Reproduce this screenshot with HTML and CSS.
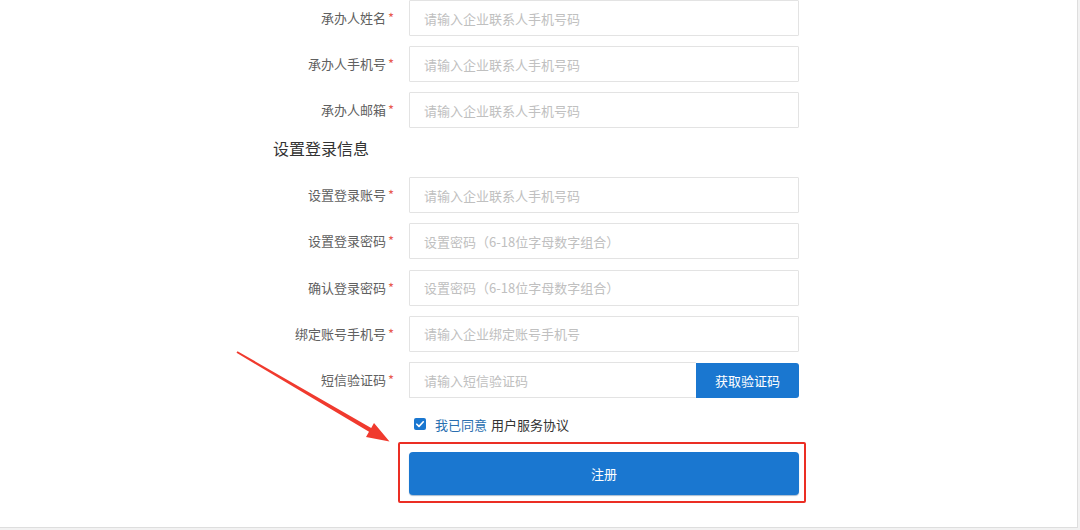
FILE: index.html
```html
<!DOCTYPE html>
<html lang="zh-CN">
<head>
<meta charset="utf-8">
<title>注册</title>
<link rel="stylesheet" href="styles.css">
</head>
<body>
<div class="page">
  <form class="form">
    <div class="row">
      <label class="label">承办人姓名<span class="req">*</span></label>
      <input class="field" type="text" placeholder="请输入企业联系人手机号码">
    </div>
    <div class="row">
      <label class="label">承办人手机号<span class="req">*</span></label>
      <input class="field" type="text" placeholder="请输入企业联系人手机号码">
    </div>
    <div class="row">
      <label class="label">承办人邮箱<span class="req">*</span></label>
      <input class="field" type="text" placeholder="请输入企业联系人手机号码">
    </div>

    <h2 class="section-title">设置登录信息</h2>

    <div class="group">
      <div class="row">
        <label class="label">设置登录账号<span class="req">*</span></label>
        <input class="field" type="text" placeholder="请输入企业联系人手机号码">
      </div>
      <div class="row">
        <label class="label">设置登录密码<span class="req">*</span></label>
        <input class="field" type="text" placeholder="设置密码（6-18位字母数字组合）">
      </div>
      <div class="row">
        <label class="label">确认登录密码<span class="req">*</span></label>
        <input class="field" type="text" placeholder="设置密码（6-18位字母数字组合）">
      </div>
      <div class="row">
        <label class="label">绑定账号手机号<span class="req">*</span></label>
        <input class="field" type="text" placeholder="请输入企业绑定账号手机号">
      </div>
      <div class="row">
        <label class="label">短信验证码<span class="req">*</span></label>
        <div class="code-group">
          <input class="field code-field" type="text" placeholder="请输入短信验证码">
          <button class="code-btn" type="button">获取验证码</button>
        </div>
      </div>
    </div>

    <div class="agree">
      <span class="check"><svg viewBox="0 0 12 12" width="12" height="12"><path d="M2.8 6.2 L5 8.4 L9.3 3.8" fill="none" stroke="#fff" stroke-width="1.6" stroke-linecap="round" stroke-linejoin="round"/></svg></span>
      <span class="agree-blue">我已同意</span>
      <span class="agree-text">用户服务协议</span>
    </div>

    <div class="submit-wrap">
      <button class="submit" type="button">注册</button>
      <div class="mark-box"></div>
    </div>
  </form>

  <svg class="arrow" width="1080" height="530" viewBox="0 0 1080 530">
    <polygon fill="#f03a2e" points="237.5,351.2 371.2,428.0 374.0,423.0 389.5,441.5 366.0,437.0 369.0,431.8 236.5,352.8"/>
  </svg>
</div>
</body>
</html>
```

FILE: styles.css
```css
html, body {
  margin: 0;
  padding: 0;
  background: #f2f2f2;
}

body {
  font-family: "Noto Sans CJK SC", "Noto Sans", sans-serif;
  font-size: 13px;
  color: #333;
}

.page {
  position: relative;
  width: 1078px;
  height: 528px;
  box-sizing: border-box;
  background: #fff;
  border-right: 1px solid #dedede;
  border-bottom: 1px solid #dedede;
  overflow: hidden;
}

.form {
  margin: 0 0 0 273px;
  width: 526px;
  display: flex;
  flex-direction: column;
}

.group {
  display: flex;
  flex-direction: column;
  gap: 10.3px;
}

.row {
  display: flex;
  align-items: center;
  height: 36px;
  margin-bottom: 10px;
}

.group .row {
  margin-bottom: 0;
}

.label {
  width: 121px;
  margin-right: 15px;
  text-align: right;
  color: #606060;
  font-size: 13px;
  line-height: 20px;
  white-space: nowrap;
}

.req {
  color: #e85a4f;
  margin-left: 2px;
}

.field {
  box-sizing: border-box;
  width: 390px;
  height: 36px;
  border: 1px solid #e3e3e3;
  border-radius: 1px;
  padding: 0 14px;
  font-family: inherit;
  font-size: 13px;
  color: #333;
  outline: none;
  background: #fff;
}

.field::placeholder {
  color: #c0c0c0;
}

.section-title {
  margin: 0 0 19px 0;
  font-size: 16px;
  font-weight: normal;
  line-height: 20px;
  color: #333;
  height: 20px;
}

.code-group {
  display: flex;
  width: 390px;
  height: 36px;
}

.code-field {
  width: 287px;
  border-right: none;
}

.code-btn {
  width: 103px;
  height: 35px;
  margin-top: 1px;
  border: none;
  border-radius: 0 3px 3px 0;
  background: #1a77d0;
  color: #fff;
  font-family: inherit;
  font-size: 13px;
  padding: 0;
  cursor: pointer;
}

.agree {
  display: flex;
  align-items: center;
  height: 20px;
  margin: 16px 0 0 141px;
  font-size: 13px;
}

.check {
  width: 12px;
  height: 12px;
  border-radius: 2px;
  background: #1a77d0;
  display: flex;
  margin-right: 9px;
}

.agree-blue {
  color: #2a6fb0;
  margin-right: 4px;
}

.agree-text {
  color: #333;
}

.submit-wrap {
  position: relative;
  margin: 18px 0 0 136px;
  width: 390px;
}

.submit {
  display: block;
  width: 390px;
  height: 43px;
  border: none;
  border-radius: 4px;
  background: #1a77d0;
  box-shadow: 0 1px 1px rgba(0, 60, 120, 0.35);
  color: #fff;
  font-family: inherit;
  font-size: 13px;
  padding: 0;
  cursor: pointer;
}

.mark-box {
  position: absolute;
  left: -11px;
  top: -10px;
  right: -7px;
  bottom: -8px;
  border: 2px solid #eb2e24;
  border-radius: 2px;
  pointer-events: none;
}

.arrow {
  position: absolute;
  left: 0;
  top: 0;
  pointer-events: none;
}
```
